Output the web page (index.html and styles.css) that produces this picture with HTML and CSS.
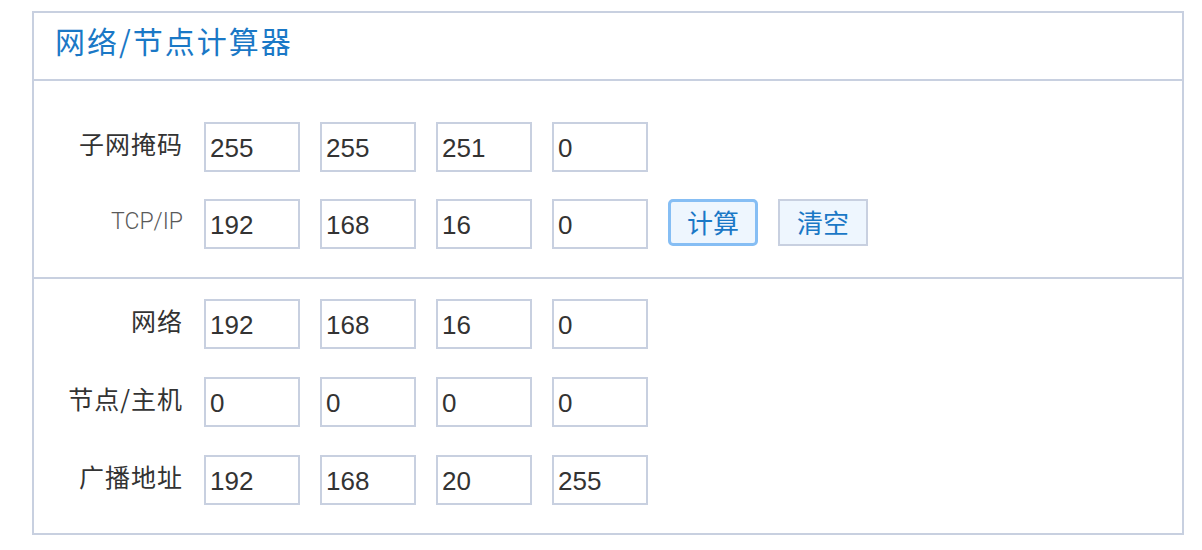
FILE: index.html
```html
<!DOCTYPE html>
<html lang="zh-CN">
<head>
<meta charset="utf-8">
<title>网络/节点计算器</title>
<link rel="stylesheet" href="styles.css">
</head>
<body>
<div class="panel">
  <div class="panel-head"><h1 class="title">网络/节点计算器</h1></div>
  <div class="section section-input">
    <div class="row">
      <label class="label">子网掩码</label>
      <input class="ip" type="text" value="255">
      <input class="ip" type="text" value="255">
      <input class="ip" type="text" value="251">
      <input class="ip" type="text" value="0">
    </div>
    <div class="row">
      <label class="label label-latin">TCP/IP</label>
      <input class="ip" type="text" value="192">
      <input class="ip" type="text" value="168">
      <input class="ip" type="text" value="16">
      <input class="ip" type="text" value="0">
      <button class="btn btn-primary" type="button">计算</button>
      <button class="btn" type="button">清空</button>
    </div>
  </div>
  <div class="section section-output">
    <div class="row">
      <label class="label">网络</label>
      <input class="ip" type="text" value="192">
      <input class="ip" type="text" value="168">
      <input class="ip" type="text" value="16">
      <input class="ip" type="text" value="0">
    </div>
    <div class="row">
      <label class="label">节点/主机</label>
      <input class="ip" type="text" value="0">
      <input class="ip" type="text" value="0">
      <input class="ip" type="text" value="0">
      <input class="ip" type="text" value="0">
    </div>
    <div class="row">
      <label class="label">广播地址</label>
      <input class="ip" type="text" value="192">
      <input class="ip" type="text" value="168">
      <input class="ip" type="text" value="20">
      <input class="ip" type="text" value="255">
    </div>
  </div>
</div>
</body>
</html>
```
FILE: styles.css
```css
html, body {
  margin: 0;
  padding: 0;
  background: #ffffff;
}
body {
  font-family: "Noto Sans CJK SC", "Liberation Sans", sans-serif;
  color: #333333;
}
.panel {
  margin: 11px 0 0 32px;
  width: 1152px;
  height: 524px;
  box-sizing: border-box;
  border: 2px solid #c8d0e0;
  display: flex;
  flex-direction: column;
}
.panel-head {
  height: 66px;
  border-bottom: 2px solid #c8d0e0;
  padding: 0 21px;
  display: flex;
  align-items: flex-start;
}
.title {
  margin: 0;
  font-size: 30px;
  font-weight: normal;
  line-height: 54px;
  color: #1a78c6;
  letter-spacing: 2px;
}
.section {
  display: flex;
  flex-direction: column;
  gap: 27px;
}
.section-input {
  padding: 41px 0 28px;
  border-bottom: 2px solid #c8d0e0;
}
.section-output {
  padding: 20px 0 0;
  gap: 28px;
}
.row {
  display: flex;
  align-items: flex-start;
  gap: 20px;
  height: 50px;
}
.label {
  width: 149px;
  margin-right: 1px;
  text-align: right;
  font-size: 25px;
  line-height: 42px;
  color: #333333;
  letter-spacing: 1px;
}
.label-latin {
  font-family: "Roboto", "Liberation Sans", sans-serif;
  font-weight: 300;
  font-size: 23px;
  line-height: 45px;
  color: #5a5a5a;
  letter-spacing: 0;
}
.ip {
  width: 96px;
  height: 50px;
  box-sizing: border-box;
  border: 2px solid #c8d0e0;
  margin: 0;
  padding: 2px 0 0 4px;
  font-family: "Liberation Sans", Arial, sans-serif;
  font-size: 26px;
  color: #333333;
  background: #ffffff;
  outline: none;
}
.btn {
  width: 90px;
  height: 47px;
  box-sizing: border-box;
  margin: 0;
  padding: 0 0 2px;
  border: 2px solid #c8d0e0;
  border-radius: 0;
  background: #eef6fe;
  color: #1a78c6;
  font-family: "Noto Sans CJK SC", sans-serif;
  font-size: 26px;
  line-height: 1;
  cursor: pointer;
}
.btn-primary {
  border: 3px solid #86bef4;
  border-radius: 5px;
}
```
